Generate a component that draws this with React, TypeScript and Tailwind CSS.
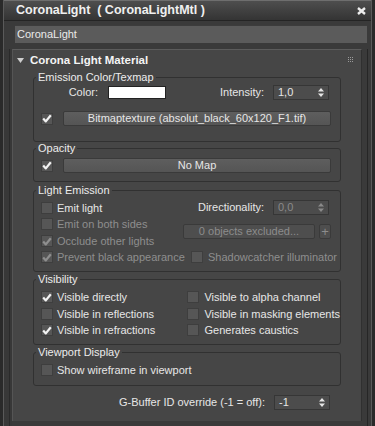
import type { ReactNode } from "react";

const Tick = ({ color }: { color: string }) => (
  <svg width="10" height="9" viewBox="0 0 10 9">
    <path d="M1.2 4.6 L3.8 7.4 L8.8 1.2" fill="none" stroke={color} strokeWidth="2.2" strokeLinejoin="round" />
  </svg>
);

function Check({ checked = false, disabled = false }: { checked?: boolean; disabled?: boolean }) {
  return (
    <div className="flex h-[12px] w-[12px] shrink-0 items-center justify-center border border-[#3e3e3e] bg-[#565656]">
      {checked && <Tick color={disabled ? "#8f8f8f" : "#f2f2f2"} />}
    </div>
  );
}

function Row({
  label,
  checked,
  disabled,
  gap = "ml-[4px]",
  className = "",
}: {
  label: string;
  checked?: boolean;
  disabled?: boolean;
  gap?: string;
  className?: string;
}) {
  return (
    <div className={`flex h-[16px] items-center ${className}`}>
      <Check checked={checked} disabled={disabled} />
      <span className={`${gap} whitespace-nowrap ${disabled ? "text-[#8e8e8e]" : "text-[#e6e6e6]"}`}>{label}</span>
    </div>
  );
}

function Spinner({ value, disabled = false }: { value: string; disabled?: boolean }) {
  const c = disabled ? "#8a8a8a" : "#e6e6e6";
  return (
    <div className="ml-[9px] flex h-[15px] w-[56px] items-center justify-between border border-[#363636] bg-[#4c4c4c] pl-[4px] pr-[4px]">
      <span style={{ color: c }}>{value}</span>
      <svg width="6" height="9" viewBox="0 0 6 9">
        <path d="M3 0 L6 3.5 L0 3.5 Z M0 5.5 L6 5.5 L3 9 Z" fill={c} />
      </svg>
    </div>
  );
}

function Btn({ children, className = "", disabled = false }: { children: ReactNode; className?: string; disabled?: boolean }) {
  return (
    <div
      className={`flex h-[15px] items-center justify-center rounded-[2px] border border-[#3a3a3a] whitespace-nowrap ${
        disabled ? "bg-[#4e4e4e] text-[#8c8c8c]" : "bg-gradient-to-b from-[#5e5e5e] to-[#555555] text-[#e6e6e6]"
      } ${className}`}
    >
      {children}
    </div>
  );
}

function Group({ title, className, children }: { title: string; className: string; children: ReactNode }) {
  return (
    <div className={`relative w-[308px] rounded-[3px] border border-[#313131] ${className}`}>
      <span className="absolute left-[2px] top-[-7px] bg-[#464646] px-[2px] leading-[13px] text-[#ececec]">{title}</span>
      {children}
    </div>
  );
}

export default function App() {
  return (
    <div className="h-[426px] w-[375px] overflow-hidden bg-[#2a2a2a] px-[3px] font-['Liberation_Sans',Arial,sans-serif] text-[11px] leading-[13px] text-[#e6e6e6]">
      <div className="flex h-full flex-col border-x border-[#5a5a5a] bg-[#3a3a3a]">
        <div className="flex h-[21px] shrink-0 items-center border-t border-b border-t-[#6e6e6e] border-b-[#242424] bg-gradient-to-b from-[#4e4e4e] to-[#343434] pl-[12px] pr-[5px]">
          <span className="whitespace-pre text-[12.5px] font-bold text-[#f0f0f0]">CoronaLight  ( CoronaLightMtl )</span>
          <svg className="ml-auto" width="9" height="8" viewBox="0 0 9 8">
            <path d="M1 1 L8 7 M8 1 L1 7" stroke="#ececec" strokeWidth="2.4" />
          </svg>
        </div>

        <div className="ml-[11px] mr-[4px] mt-[4px] flex h-[18px] shrink-0 items-center border-t border-[#3c3c3c] bg-[#5b5b5b] pl-[2px] text-[#eaeaea]">
          CoronaLight
        </div>

        <div className="mt-[6px] flex flex-1 items-start">
          <div className="flex h-full w-[8px] justify-end bg-[#383838]">
            <div className="mr-[2px] h-full w-[1px] bg-[#2a2a2a]" />
          </div>

          <div className="flex h-[372px] w-[350px] flex-col border-l border-r border-t border-l-[#555555] border-r-[#303030] border-t-[#5c5c5c] bg-[#464646]">
            <div className="flex h-[20px] shrink-0 items-center pl-[4px] pr-[7px]">
              <svg width="7" height="5" viewBox="0 0 7 5">
                <path d="M0 0 L7 0 L3.5 5 Z" fill="#cfcfcf" />
              </svg>
              <span className="ml-[6px] text-[11.5px] font-bold text-[#f4f4f4]">Corona Light Material</span>
              <svg className="ml-auto" width="6" height="6" viewBox="0 0 6 6">
                {[0, 2, 4].map((y) =>
                  [0, 2, 4].map((x) => <rect key={`${x}-${y}`} x={x} y={y} width="1" height="1" fill="#9a9a9a" />)
                )}
              </svg>
            </div>

            <div className="ml-[20px] flex flex-col">
              <Group title="Emission Color/Texmap" className="mt-[7px] h-[65px] pt-[6px]">
                <div className="flex h-[16px] items-center pr-[11px]">
                  <span className="w-[64px] text-right">Color:</span>
                  <div className="ml-[10px] h-[13px] w-[58px] border border-[#222222] bg-white" />
                  <span className="ml-auto">Intensity:</span>
                  <Spinner value="1,0" />
                </div>
                <div className="mt-[11px] flex h-[15px] items-center pl-[7px]">
                  <Check checked />
                  <Btn className="ml-[10px] w-[268px]">Bitmaptexture (absolut_black_60x120_F1.tif)</Btn>
                </div>
              </Group>

              <Group title="Opacity" className="mt-[6px] h-[34px] pt-[9px]">
                <div className="flex h-[15px] items-center pl-[7px]">
                  <Check checked />
                  <Btn className="ml-[10px] w-[268px]">No Map</Btn>
                </div>
              </Group>

              <Group title="Light Emission" className="mt-[8px] flex h-[82px] pt-[9px]">
                <div className="w-[149px] pl-[7px]">
                  <Row label="Emit light" />
                  <Row label="Emit on both sides" disabled />
                  <Row label="Occlude other lights" checked disabled className="mt-[1px]" />
                  <Row label="Prevent black appearance" checked disabled />
                </div>
                <div className="flex-1">
                  <div className="flex h-[14px] items-center justify-end pr-[11px]">
                    <span>Directionality:</span>
                    <Spinner value="0,0" disabled />
                  </div>
                  <div className="mt-[10px] flex h-[14px] items-center">
                    <Btn disabled className="w-[132px]">0 objects excluded...</Btn>
                    <Btn disabled className="ml-[4px] w-[12px] text-[13px]">+</Btn>
                  </div>
                  <Row label="Shadowcatcher illuminator" disabled gap="ml-[5px]" className="mt-[11px] pl-[8px]" />
                </div>
              </Group>

              <Group title="Visibility" className="mt-[7px] flex h-[66px] pt-[9px]">
                <div className="w-[149px] pl-[7px]">
                  <Row label="Visible directly" checked />
                  <Row label="Visible in reflections" className="mt-[1px]" />
                  <Row label="Visible in refractions" checked />
                </div>
                <div className="flex-1 pl-[8px]">
                  <Row label="Visible to alpha channel" gap="ml-[5px]" />
                  <Row label="Visible in masking elements" gap="ml-[5px]" className="mt-[1px]" />
                  <Row label="Generates caustics" gap="ml-[5px]" />
                </div>
              </Group>

              <Group title="Viewport Display" className="mt-[7px] h-[34px] pt-[9px]">
                <div className="pl-[7px]">
                  <Row label="Show wireframe in viewport" />
                </div>
              </Group>

              <div className="mt-[9px] flex h-[15px] w-[308px] items-center justify-end pr-[11px]">
                <span>G-Buffer ID override (-1 = off):</span>
                <Spinner value="-1" />
              </div>
            </div>
          </div>

          <div className="flex h-full flex-1 justify-center bg-[#3a3a3a]">
            <div className="ml-[2px] h-full w-[1px] bg-[#262626]" />
          </div>
        </div>
      </div>
    </div>
  );
}
